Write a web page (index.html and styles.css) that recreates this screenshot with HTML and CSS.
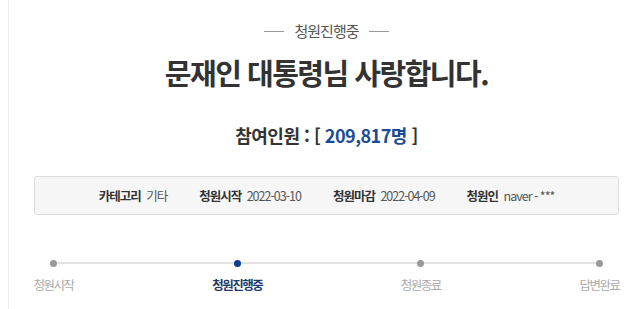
FILE: index.html
```html
<!DOCTYPE html>
<html lang="ko">
<head>
    <meta charset="UTF-8">
    <meta name="viewport" content="width=device-width, initial-scale=1.0">
    <title>청원진행중</title>
    <link rel="stylesheet" href="styles.css">
</head>
<body>
<div class="wrap">
    <p class="status"><span>청원진행중</span></p>
    <h1 class="title">문재인 대통령님 사랑합니다.</h1>
    <h2 class="count">참여인원 : [ <span class="num">209,817명</span> ]</h2>

    <ul class="info">
        <li><strong>카테고리</strong> 기타</li>
        <li><strong>청원시작</strong> 2022-03-10</li>
        <li><strong>청원마감</strong> 2022-04-09</li>
        <li><strong>청원인</strong> naver - ***</li>
    </ul>

    <ol class="steps">
        <li><i class="dot"></i><span>청원시작</span></li>
        <li class="on"><i class="dot"></i><span>청원진행중</span></li>
        <li><i class="dot"></i><span>청원종료</span></li>
        <li><i class="dot"></i><span>답변완료</span></li>
    </ol>
</div>
</body>
</html>
```

FILE: styles.css
```css
body {
    margin: 0;
    overflow: hidden;
    background: #fff;
    font-family: "Noto Sans CJK KR", "Noto Sans", sans-serif;
    color: #333;
}
.wrap {
    margin-left: 8px;
    width: 636px;
    min-height: 309px;
    border-left: 1px solid #ececec;
    box-sizing: border-box;
}
.status {
    display: flex;
    justify-content: center;
    align-items: center;
    gap: 10px;
    margin: 0;
    padding-top: 21px;
    font-size: 15px;
    line-height: 20px;
    letter-spacing: -1px;
    color: #555;
}
.status::before,
.status::after {
    content: "";
    width: 20px;
    height: 1px;
    background: #999;
}
.title {
    margin: 11px 0 0;
    text-align: center;
    font-size: 29px;
    line-height: 40px;
    font-weight: bold;
    letter-spacing: -1.5px;
    color: #333;
}
.count {
    margin: 30px 0 0;
    text-align: center;
    font-size: 18px;
    line-height: 26px;
    font-weight: bold;
    letter-spacing: -0.5px;
    color: #333;
}
.count .num {
    color: #1b4b96;
}
.info {
    display: flex;
    justify-content: center;
    align-items: center;
    gap: 32px;
    width: 585px;
    height: 39px;
    margin: 28px auto 0;
    padding: 0;
    list-style: none;
    box-sizing: border-box;
    background: #f6f6f6;
    border: 1px solid #dedede;
    border-radius: 3px;
    font-size: 12.5px;
    letter-spacing: -1px;
    color: #555;
}
.info strong {
    margin-right: 3px;
    color: #333;
}
.steps {
    display: flex;
    justify-content: space-between;
    width: 586px;
    margin: 45px auto 0;
    padding: 0;
    list-style: none;
    background: linear-gradient(#e2e2e2, #e2e2e2) no-repeat 19px 2px / calc(100% - 38px) 2px;
}
.steps li {
    display: flex;
    flex-direction: column;
    align-items: center;
    font-size: 12.5px;
    line-height: 16px;
    letter-spacing: -1.5px;
    color: #aaa;
}
.dot {
    width: 7px;
    height: 7px;
    border-radius: 50%;
    background: #999;
}
.steps span {
    margin-top: 10px;
}
.steps .on {
    font-weight: bold;
    color: #1e3a6c;
}
.steps .on .dot {
    background: #0b3c8f;
}
```
